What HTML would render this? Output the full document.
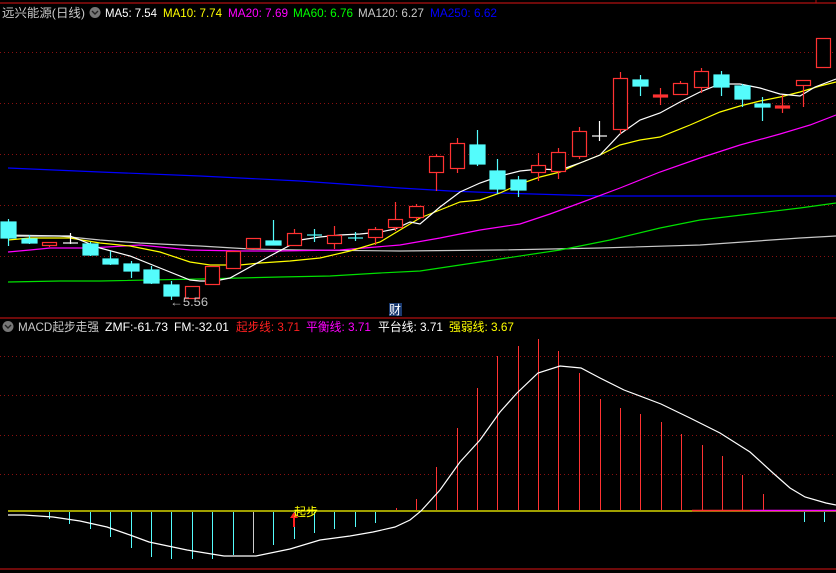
<!DOCTYPE html>
<html><head><meta charset="utf-8"><style>
html,body{margin:0;padding:0;background:#000;width:836px;height:573px;overflow:hidden}
svg{display:block}
text{font-family:"Liberation Sans","Noto Sans CJK SC",sans-serif;font-size:12px}
</style></head><body>
<svg width="836" height="573" viewBox="0 0 836 573" xmlns="http://www.w3.org/2000/svg">
<rect width="836" height="573" fill="#000"/>
<line x1="0" y1="3" x2="836" y2="3" stroke="#b01010" stroke-width="1.2"/>
<line x1="816" y1="0" x2="816" y2="3" stroke="#b01010"/>
<line x1="0" y1="318" x2="836" y2="318" stroke="#b01010" stroke-width="1.2"/>
<line x1="0" y1="569" x2="836" y2="569" stroke="#b01010" stroke-width="1.2"/>
<g stroke="#8a1010" stroke-dasharray="1 3" stroke-width="1">
<line x1="0" y1="52.5" x2="836" y2="52.5"/><line x1="0" y1="103.5" x2="836" y2="103.5"/><line x1="0" y1="154.5" x2="836" y2="154.5"/><line x1="0" y1="205.5" x2="836" y2="205.5"/><line x1="0" y1="256.5" x2="836" y2="256.5"/>
<line x1="0" y1="356.5" x2="836" y2="356.5"/><line x1="0" y1="395.5" x2="836" y2="395.5"/><line x1="0" y1="435.5" x2="836" y2="435.5"/><line x1="0" y1="474.5" x2="836" y2="474.5"/>
</g>
<g fill="none" stroke-width="1.2">
<polyline stroke="#0000ff" points="8,168 100,172 200,176 300,181 400,188 450,191 500,193 600,196 836,196"/>
<polyline stroke="#c8c8c8" points="8,235 60,236 100,240 140,243 200,246 250,249 300,250 400,251 500,250 600,248 700,245 800,238 836,236"/>
<polyline stroke="#00e000" points="8,282 60,281 100,281 200,279 280,277 330,276 380,273 420,271 460,265 500,259 560,250 610,240 660,228 700,220 750,214 800,208 836,203"/>
<polyline stroke="#ff00ff" points="8,252 30,250 50,248 90,248 140,245 190,250 240,251 280,251 340,250 400,245 440,238 480,230 520,224 550,214 580,203 620,188 660,172 700,158 740,145 780,134 810,125 836,115"/>
<polyline stroke="#ffff00" points="8,240 30,238 70,238 100,243 130,246 160,252 190,262 210,265 240,265 260,263 290,261 320,258 350,251 380,242 400,230 420,218 440,210 460,202 480,200 500,193 520,184 540,177 560,172 580,163 600,155 620,145 640,140 660,137 690,125 720,112 740,106 760,101 780,97 800,92 820,86 836,82"/>
<polyline stroke="#ffffff" points="8,236 70,236 100,248 130,256 160,268 190,280 200,281 215,281 230,278 250,267 270,256 285,248 300,240 320,237 340,235 360,234 380,232 395,229 410,222 420,224 440,207 460,192 480,183 500,176 520,171 540,169 560,170 580,163 600,155 620,134 640,120 660,113 680,102 700,92 720,84 740,84 760,88 780,94 800,96 815,87 836,79"/>
</g>
<g stroke="#54fcfc" fill="#54fcfc" stroke-width="1.2">
<line x1="8.5" y1="219" x2="8.5" y2="246"/><rect x="1" y="222" width="15" height="16"/>
<line x1="29.5" y1="235" x2="29.5" y2="244"/><rect x="22" y="239" width="15" height="4"/>
<line x1="90.5" y1="242" x2="90.5" y2="256"/><rect x="83" y="244" width="15" height="11"/>
<line x1="110.5" y1="251" x2="110.5" y2="265"/><rect x="103" y="259" width="15" height="5"/>
<line x1="131.5" y1="261" x2="131.5" y2="278"/><rect x="124" y="264" width="15" height="7"/>
<line x1="151.5" y1="266" x2="151.5" y2="284"/><rect x="144" y="270" width="15" height="13"/>
<line x1="171.5" y1="281" x2="171.5" y2="300"/><rect x="164" y="285" width="15" height="11"/>
<line x1="273.5" y1="220" x2="273.5" y2="245"/><rect x="266" y="241" width="15" height="4"/>
<line x1="314.5" y1="229" x2="314.5" y2="242"/><line x1="307" y1="235" x2="322" y2="235"/>
<line x1="355.5" y1="232" x2="355.5" y2="241"/><line x1="348" y1="238" x2="363" y2="238"/>
<line x1="477.5" y1="130" x2="477.5" y2="166"/><rect x="470" y="145" width="15" height="19"/>
<line x1="497.5" y1="159" x2="497.5" y2="194"/><rect x="490" y="171" width="15" height="18"/>
<line x1="518.5" y1="176" x2="518.5" y2="197"/><rect x="511" y="180" width="15" height="10"/>
<line x1="640.5" y1="75" x2="640.5" y2="96"/><rect x="633" y="80" width="15" height="6"/>
<line x1="721.5" y1="71" x2="721.5" y2="96"/><rect x="714" y="75" width="15" height="12"/>
<line x1="742.5" y1="84" x2="742.5" y2="107"/><rect x="735" y="86" width="15" height="13"/>
<line x1="762.5" y1="97" x2="762.5" y2="121"/><rect x="755" y="104" width="15" height="3"/>
</g>
<g stroke="#fff" stroke-width="1.2">
<line x1="70.5" y1="233" x2="70.5" y2="244"/><line x1="63" y1="243" x2="78" y2="243"/>
<line x1="599.5" y1="121" x2="599.5" y2="141"/><line x1="592" y1="136" x2="607" y2="136"/>
</g>
<g stroke="#ff3232" fill="#000" stroke-width="1.2">
<line x1="49.5" y1="245" x2="49.5" y2="247"/><rect x="42.5" y="242.5" width="14" height="3"/>
<rect x="185.5" y="286.5" width="14" height="12"/>
<rect x="205.5" y="266.5" width="14" height="18"/>
<rect x="226.5" y="251.5" width="14" height="17"/>
<rect x="246.5" y="238.5" width="14" height="10"/>
<line x1="294.5" y1="229" x2="294.5" y2="233"/><rect x="287.5" y="233.5" width="14" height="12"/>
<line x1="334.5" y1="226" x2="334.5" y2="249"/><rect x="327.5" y="235.5" width="14" height="8"/>
<line x1="375.5" y1="227" x2="375.5" y2="245"/><rect x="368.5" y="229.5" width="14" height="8"/>
<line x1="395.5" y1="202" x2="395.5" y2="231"/><rect x="388.5" y="219.5" width="14" height="8"/>
<line x1="416.5" y1="204" x2="416.5" y2="220"/><rect x="409.5" y="206.5" width="14" height="11"/>
<line x1="436.5" y1="154" x2="436.5" y2="191"/><rect x="429.5" y="156.5" width="14" height="16"/>
<line x1="457.5" y1="138" x2="457.5" y2="173"/><rect x="450.5" y="143.5" width="14" height="25"/>
<line x1="538.5" y1="153" x2="538.5" y2="181"/><rect x="531.5" y="165.5" width="14" height="7"/>
<line x1="558.5" y1="148" x2="558.5" y2="179"/><rect x="551.5" y="152.5" width="14" height="19"/>
<line x1="579.5" y1="127" x2="579.5" y2="159"/><rect x="572.5" y="131.5" width="14" height="25"/>
<line x1="620.5" y1="72" x2="620.5" y2="134"/><rect x="613.5" y="78.5" width="14" height="51"/>
<line x1="660.5" y1="88" x2="660.5" y2="105"/><rect x="653.5" y="95" width="14" height="2" fill="#ff3232"/>
<line x1="680.5" y1="81" x2="680.5" y2="83"/><rect x="673.5" y="83.5" width="14" height="11"/>
<line x1="701.5" y1="68" x2="701.5" y2="93"/><rect x="694.5" y="71.5" width="14" height="16"/>
<line x1="782.5" y1="95" x2="782.5" y2="113"/><rect x="775.5" y="106" width="14" height="2" fill="#ff3232"/>
<line x1="803.5" y1="85" x2="803.5" y2="107"/><rect x="796.5" y="80.5" width="14" height="5"/>
<rect x="816.5" y="38.5" width="14" height="29"/>
</g>
<text x="170" y="306" fill="#c0c0c0" textLength="38" lengthAdjust="spacingAndGlyphs">←5.56</text>
<rect x="389" y="303" width="13" height="13" fill="#1a3a70"/>
<text x="389" y="314" fill="#fff">财</text>
<text x="2" y="17" fill="#c8c8c8" font-size="13" textLength="83" lengthAdjust="spacingAndGlyphs">远兴能源(日线)</text>
<circle cx="95" cy="12.5" r="5.5" fill="#777"/><path d="M92,11 L95,14 L98,11" stroke="#222" stroke-width="1.4" fill="none"/>
<text x="105" y="17" fill="#fff" textLength="52" lengthAdjust="spacingAndGlyphs">MA5: 7.54</text>
<text x="163" y="17" fill="#ffff00" textLength="59" lengthAdjust="spacingAndGlyphs">MA10: 7.74</text>
<text x="228" y="17" fill="#ff00ff" textLength="60" lengthAdjust="spacingAndGlyphs">MA20: 7.69</text>
<text x="293" y="17" fill="#00ff00" textLength="60" lengthAdjust="spacingAndGlyphs">MA60: 6.76</text>
<text x="358" y="17" fill="#c8c8c8" textLength="66" lengthAdjust="spacingAndGlyphs">MA120: 6.27</text>
<text x="430" y="17" fill="#0000ff" textLength="67" lengthAdjust="spacingAndGlyphs">MA250: 6.62</text>
<circle cx="8" cy="326.5" r="5.5" fill="#777"/><path d="M5,325 L8,328 L11,325" stroke="#222" stroke-width="1.4" fill="none"/>
<text x="18" y="331" fill="#c8c8c8" textLength="81" lengthAdjust="spacingAndGlyphs">MACD起步走强</text>
<text x="105" y="331" fill="#fff" textLength="63" lengthAdjust="spacingAndGlyphs">ZMF:-61.73</text>
<text x="174" y="331" fill="#fff" textLength="55" lengthAdjust="spacingAndGlyphs">FM:-32.01</text>
<text x="236" y="331" fill="#ff2020" textLength="64" lengthAdjust="spacingAndGlyphs">起步线: 3.71</text>
<text x="306" y="331" fill="#ff00ff" textLength="65" lengthAdjust="spacingAndGlyphs">平衡线: 3.71</text>
<text x="378" y="331" fill="#fff" textLength="65" lengthAdjust="spacingAndGlyphs">平台线: 3.71</text>
<text x="449" y="331" fill="#ffff00" textLength="65" lengthAdjust="spacingAndGlyphs">强弱线: 3.67</text>
<line x1="8" y1="511" x2="836" y2="511" stroke="#ffff00" stroke-width="1.2"/>
<line x1="692" y1="510.5" x2="750" y2="510.5" stroke="#ff3232" stroke-width="1.5"/>
<line x1="750" y1="510.5" x2="836" y2="510.5" stroke="#ff00ff" stroke-width="1.5"/>
<g stroke="#54fcfc" stroke-width="1">
<line x1="49.5" y1="512" x2="49.5" y2="519"/><line x1="69.5" y1="512" x2="69.5" y2="524"/><line x1="90.5" y1="512" x2="90.5" y2="529"/><line x1="110.5" y1="512" x2="110.5" y2="537"/><line x1="131.5" y1="512" x2="131.5" y2="548"/><line x1="151.5" y1="512" x2="151.5" y2="557"/><line x1="171.5" y1="512" x2="171.5" y2="559"/><line x1="192.5" y1="512" x2="192.5" y2="559"/><line x1="212.5" y1="512" x2="212.5" y2="559"/><line x1="233.5" y1="512" x2="233.5" y2="555"/><line x1="273.5" y1="512" x2="273.5" y2="545"/><line x1="294.5" y1="512" x2="294.5" y2="539"/><line x1="314.5" y1="512" x2="314.5" y2="533"/><line x1="334.5" y1="512" x2="334.5" y2="529"/><line x1="355.5" y1="512" x2="355.5" y2="527"/><line x1="375.5" y1="512" x2="375.5" y2="523"/><line x1="804.5" y1="512" x2="804.5" y2="522"/><line x1="824.5" y1="512" x2="824.5" y2="522"/>
</g>
<line x1="253.5" y1="512" x2="253.5" y2="553" stroke="#ccc"/>
<g stroke="#ff3232" stroke-width="1">
<line x1="396.5" y1="510" x2="396.5" y2="508"/><line x1="416.5" y1="510" x2="416.5" y2="499"/><line x1="436.5" y1="510" x2="436.5" y2="467"/><line x1="457.5" y1="510" x2="457.5" y2="428"/><line x1="477.5" y1="510" x2="477.5" y2="388"/><line x1="497.5" y1="510" x2="497.5" y2="356"/><line x1="518.5" y1="510" x2="518.5" y2="346"/><line x1="538.5" y1="510" x2="538.5" y2="339"/><line x1="558.5" y1="510" x2="558.5" y2="351"/><line x1="579.5" y1="510" x2="579.5" y2="373"/><line x1="600.5" y1="510" x2="600.5" y2="399"/><line x1="620.5" y1="510" x2="620.5" y2="408"/><line x1="640.5" y1="510" x2="640.5" y2="414"/><line x1="661.5" y1="510" x2="661.5" y2="422"/><line x1="681.5" y1="510" x2="681.5" y2="434"/><line x1="702.5" y1="510" x2="702.5" y2="445"/><line x1="722.5" y1="510" x2="722.5" y2="456"/><line x1="742.5" y1="510" x2="742.5" y2="475"/><line x1="763.5" y1="510" x2="763.5" y2="494"/>
</g>
<polyline fill="none" stroke="#fff" stroke-width="1.2" points="8,515 24,515 53,517 80,521 107,527 130,535 149,542 187,550 224,556 256,556 290,549 320,540 350,536 373,532 395,527 410,520 421,511 440,490 460,462 480,440 500,412 517,393 538,373 560,366 581,368 600,378 624,390 661,404 690,418 720,433 750,452 773,473 790,488 805,497 826,503 836,505"/>
<path d="M294,512 L290,518 L293,518 L293,527 L295,527 L295,518 L298,518 Z" fill="#ff2020"/>
<text x="294" y="516" fill="#ffff00">起步</text>
</svg>
</body></html>
